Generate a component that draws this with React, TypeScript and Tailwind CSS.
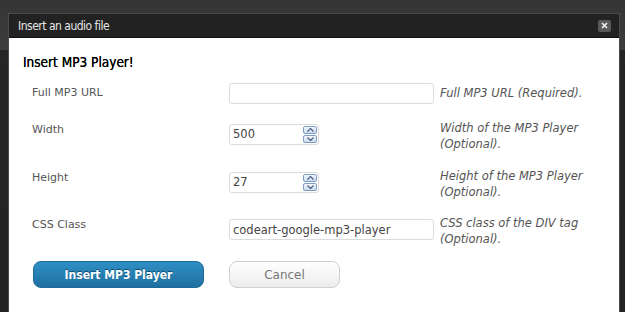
import React from 'react';

const sans = "font-['DejaVu_Sans',sans-serif]";
const cond = "font-['DejaVu_Sans_Condensed','DejaVu_Sans',sans-serif]";

function Spinner() {
  return (
    <div className="flex flex-col gap-[1px]">
      {['up', 'down'].map((d) => (
        <div
          key={d}
          className="w-[14px] h-[8px] rounded-[2px] border border-[#7f9cc6] bg-[linear-gradient(#f4f8fd,#c9daf0)] flex items-center justify-center"
        >
          <svg width="7" height="4" viewBox="0 0 7 4">
            {d === 'up' ? (
              <path d="M0.5 3.5 L3.5 0.5 L6.5 3.5" fill="none" stroke="#4a5f80" strokeWidth="1.2" />
            ) : (
              <path d="M0.5 0.5 L3.5 3.5 L6.5 0.5" fill="none" stroke="#4a5f80" strokeWidth="1.2" />
            )}
          </svg>
        </div>
      ))}
    </div>
  );
}

function Label({ children }: { children: React.ReactNode }) {
  return <div className={`w-[220px] shrink-0 pl-[23px] pt-[3px] text-[11px] leading-[14px] text-[#555] ${sans}`}>{children}</div>;
}

function Help({ children, pt = 'pt-0' }: { children: React.ReactNode; pt?: string }) {
  return <div className={`pl-[6px] ${pt} text-[11.5px] leading-[16px] italic text-[#555] w-[170px] ${sans}`}>{children}</div>;
}

const inputCls = `h-[21px] border border-[#dcdcdc] rounded-[3px] bg-white px-[3px] text-[11.5px] text-[#444] outline-none ${sans}`;

export default function App() {
  return (
    <div className="w-[625px] h-[312px] overflow-hidden bg-[linear-gradient(#353535_0px,#3c3c3c_50px,#262626_50px,#232323_312px)] pt-[13px] pl-[8px]">
      <div className="w-[612px] h-[320px] border border-[#4a4a4a] bg-white flex flex-col">
        <div className="h-[24px] bg-[#222] border-b border-[#111] flex items-center justify-between pl-[9px] pr-[8px]">
          <span className={`text-[12px] tracking-[-0.5px] text-[#e6e6e6] ${cond}`}>Insert an audio file</span>
          <div className="w-[13px] h-[12px] rounded-[2px] bg-[#5a5a5a] flex items-center justify-center">
            <svg width="7" height="7" viewBox="0 0 7 7">
              <path d="M1 1 L6 6 M6 1 L1 6" stroke="#f2f2f2" strokeWidth="1.6" />
            </svg>
          </div>
        </div>
        <div className="flex-1 bg-white">
          <div className={`pl-[14px] pt-[16px] text-[13.5px] leading-[16px] text-black [text-shadow:0_0_0.4px_#000] ${cond}`}>Insert MP3 Player!</div>

          <div className="mt-[13px] h-[37px] flex items-start">
            <Label>Full MP3 URL</Label>
            <input className={`${inputCls} w-[205px]`} defaultValue="" />
            <Help pt="pt-[2px]">Full MP3 URL (Required).</Help>
          </div>

          <div className="h-[48px] flex items-start">
            <Label>Width</Label>
            <div className={`${inputCls} mt-[4px] w-[90px] flex items-center justify-between pr-[1px]`}>
              <span>500</span>
              <Spinner />
            </div>
            <div className="w-[115px]" />
            <Help>Width of the MP3 Player (Optional).</Help>
          </div>

          <div className="h-[47px] flex items-start">
            <Label>Height</Label>
            <div className={`${inputCls} mt-[4px] w-[90px] flex items-center justify-between pr-[1px]`}>
              <span>27</span>
              <Spinner />
            </div>
            <div className="w-[115px]" />
            <Help>Height of the MP3 Player (Optional).</Help>
          </div>

          <div className="h-[46px] flex items-start">
            <Label>CSS Class</Label>
            <input className={`${inputCls} mt-[4px] w-[205px]`} defaultValue="codeart-google-mp3-player" />
            <Help>CSS class of the DIV tag (Optional).</Help>
          </div>

          <div className="flex items-center pl-[24px]">
            <button className={`w-[171px] h-[27px] rounded-[8px] border border-[#1b6a99] bg-[linear-gradient(#2f8fc4,#1f6fa0)] text-white text-[12px] font-bold [text-shadow:0_-1px_0_#0d4d73] ${cond}`}>
              Insert MP3 Player
            </button>
            <button className={`ml-[25px] w-[111px] h-[27px] rounded-[8px] border border-[#cfcfcf] bg-[linear-gradient(#ffffff,#ececec)] text-[#777] text-[12px] ${sans}`}>
              Cancel
            </button>
          </div>
        </div>
      </div>
    </div>
  );
}
